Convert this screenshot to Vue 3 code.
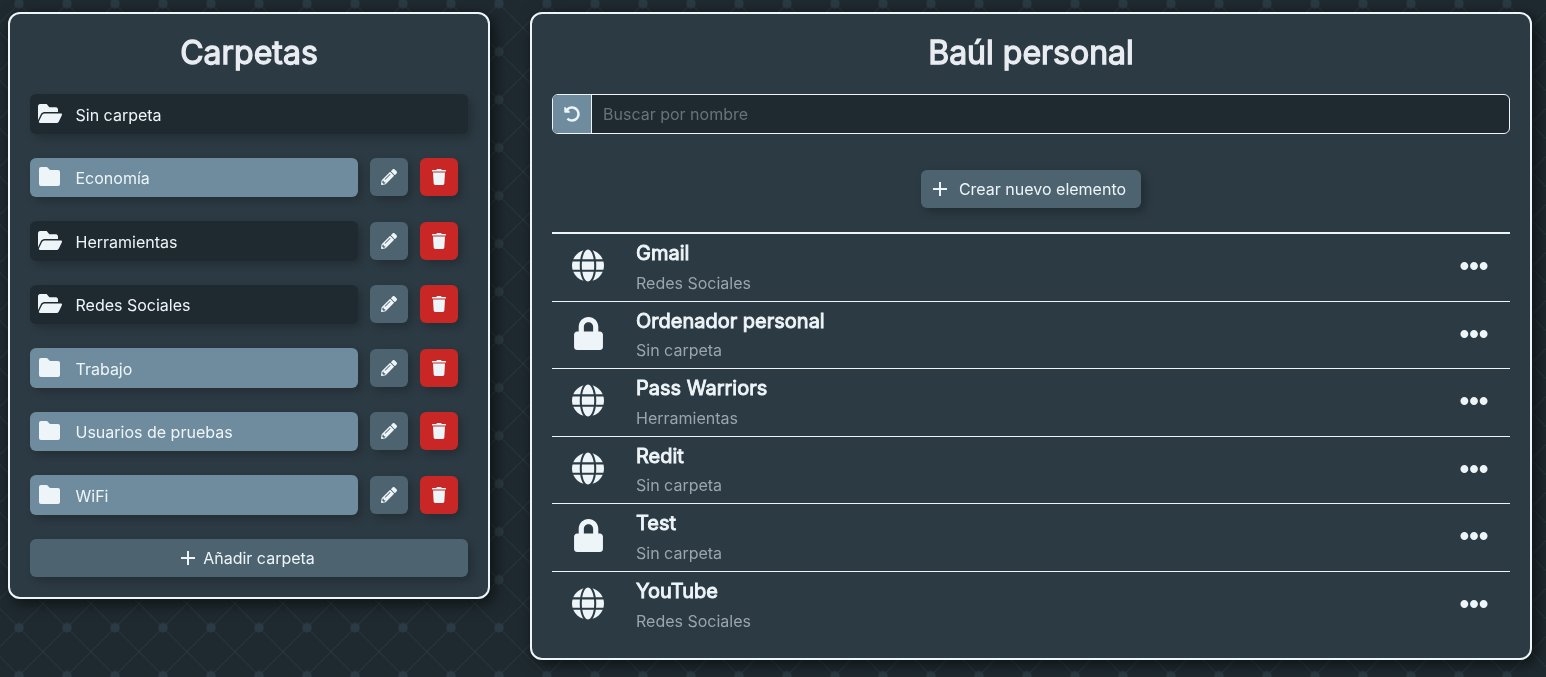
<template>
  <svg class="pattern" width="100%" height="100%" aria-hidden="true">
    <defs>
      <pattern id="diamonds" width="48" height="48" patternUnits="userSpaceOnUse" patternTransform="translate(19 3.7)">
        <path d="M0 0L48 48M48 0L0 48" stroke="#2c3a43" stroke-width="1" fill="none" />
        <circle cx="0" cy="0" r="4.7" fill="#2c3a43" />
        <circle cx="48" cy="0" r="4.7" fill="#2c3a43" />
        <circle cx="0" cy="48" r="4.7" fill="#2c3a43" />
        <circle cx="48" cy="48" r="4.7" fill="#2c3a43" />
      </pattern>
    </defs>
    <rect width="100%" height="100%" fill="url(#diamonds)" />
  </svg>

  <div class="page">
    <aside class="panel folders">
      <h1>Carpetas</h1>

      <div class="folder-row open">
        <svg class="ico-open" viewBox="0 64 576 384" preserveAspectRatio="none"><path :d="icons.folderOpen" /></svg>
        <span>Sin carpeta</span>
      </div>

      <div v-for="folder in folders" :key="folder.name" class="folder-line">
        <div class="folder-row" :class="{ open: folder.open }">
          <svg v-if="folder.open" class="ico-open" viewBox="0 64 576 384" preserveAspectRatio="none"><path :d="icons.folderOpen" /></svg>
          <svg v-else class="ico-closed" viewBox="0 0 21 19"><path :d="icons.folder" /></svg>
          <span>{{ folder.name }}</span>
        </div>
        <button class="square edit">
          <svg viewBox="0 0 512 512"><path :d="icons.pencil" /></svg>
        </button>
        <button class="square remove">
          <svg viewBox="0 0 448 512"><path :d="icons.trash" /></svg>
        </button>
      </div>

      <button class="add-folder">
        <svg class="plus" viewBox="0 0 14 14"><path d="M7 0v14M0 7h14" /></svg>
        Añadir carpeta
      </button>
    </aside>

    <main class="panel vault">
      <h1>Baúl personal</h1>

      <div class="search">
        <button class="reset">
          <svg viewBox="0 0 512 512"><path :d="icons.undo" /></svg>
        </button>
        <input type="text" placeholder="Buscar por nombre" />
      </div>

      <div class="create-wrap">
        <button class="create">
          <svg class="plus" viewBox="0 0 14 14"><path d="M7 0v14M0 7h14" /></svg>
          Crear nuevo elemento
        </button>
      </div>

      <ul class="items">
        <li v-for="item in items" :key="item.name">
          <span class="item-icon">
            <svg v-if="item.type === 'web'" class="globe" viewBox="0 0 496 512"><path :d="icons.globe" /></svg>
            <svg v-else class="lock" viewBox="0 0 448 512"><path :d="icons.lock" /></svg>
          </span>
          <div class="item-text">
            <strong>{{ item.name }}</strong>
            <span>{{ item.folder }}</span>
          </div>
          <svg class="more" viewBox="0 0 512 512"><path :d="icons.dots" /></svg>
        </li>
      </ul>
    </main>
  </div>
</template>

<script setup>
const folders = [
  { name: "Economía", open: false },
  { name: "Herramientas", open: true },
  { name: "Redes Sociales", open: true },
  { name: "Trabajo", open: false },
  { name: "Usuarios de pruebas", open: false },
  { name: "WiFi", open: false },
];

const items = [
  { name: "Gmail", folder: "Redes Sociales", type: "web" },
  { name: "Ordenador personal", folder: "Sin carpeta", type: "lock" },
  { name: "Pass Warriors", folder: "Herramientas", type: "web" },
  { name: "Redit", folder: "Sin carpeta", type: "web" },
  { name: "Test", folder: "Sin carpeta", type: "lock" },
  { name: "YouTube", folder: "Redes Sociales", type: "web" },
];

const icons = {
  folder: "M2 0h6l3 3h8a2 2 0 0 1 2 2v12a2 2 0 0 1-2 2H2a2 2 0 0 1-2-2V2a2 2 0 0 1 2-2z",
  folderOpen:
    "M572.694 292.093L500.27 416.248A63.997 63.997 0 0 1 444.989 448H45.025c-18.523 0-30.064-20.093-20.731-36.093l72.424-124.155A64 64 0 0 1 152 256h399.964c18.523 0 30.064 20.093 20.73 36.093zM152 224h328v-48c0-26.51-21.49-48-48-48H272l-64-64H48C21.49 64 0 85.49 0 112v278.046l69.077-118.418C86.214 242.25 117.989 224 152 224z",
  pencil:
    "M497.9 142.1l-46.1 46.1c-4.7 4.7-12.3 4.7-17 0l-111-111c-4.7-4.7-4.7-12.3 0-17l46.1-46.1c18.7-18.7 49.1-18.7 67.9 0l60.1 60.1c18.8 18.7 18.8 49.1 0 67.9zM284.2 99.8L21.6 362.4.4 483.9c-2.9 16.4 11.4 30.6 27.8 27.8l121.5-21.3 262.6-262.6c4.7-4.7 4.7-12.3 0-17l-111-111c-4.8-4.7-12.4-4.7-17.1 0zM124.1 339.9c-5.5-5.5-5.5-14.3 0-19.8l154-154c5.5-5.5 14.3-5.5 19.8 0s5.5 14.3 0 19.8l-154 154c-5.5 5.5-14.3 5.5-19.8 0zM88 424h48v36.3l-64.5 11.3-31.1-31.1L51.7 376H88v48z",
  trash:
    "M432 32H312l-9.4-18.7A24 24 0 0 0 281.1 0H166.8a23.72 23.72 0 0 0-21.4 13.3L136 32H16A16 16 0 0 0 0 48v16a16 16 0 0 0 16 16h416a16 16 0 0 0 16-16V48a16 16 0 0 0-16-16zM53.2 467a48 48 0 0 0 47.9 45h245.8a48 48 0 0 0 47.9-45L416 112H32z",
  undo:
    "M255.545 8c-66.269.119-126.438 26.233-170.86 68.685L48.971 40.971C33.851 25.851 8 36.559 8 57.941V192c0 13.255 10.745 24 24 24h134.059c21.382 0 32.09-25.851 16.971-40.971l-41.75-41.75c30.864-28.899 70.801-44.907 113.23-45.273 92.398-.798 170.283 73.977 169.484 169.442C423.236 348.009 349.816 424 256 424c-41.127 0-79.997-14.678-110.63-41.556-4.743-4.161-11.906-3.908-16.368.553L89.34 422.659c-4.872 4.872-4.631 12.815.482 17.433C133.798 479.813 192.074 504 256 504c136.966 0 247.999-111.033 248-247.998C504.001 119.193 392.354 7.755 255.545 8z",
  globe:
    "M336.5 160C322 70.7 287.8 8 248 8s-74 62.7-88.5 152h177zM152 256c0 22.2 1.2 43.5 3.3 64h185.3c2.1-20.5 3.3-41.8 3.3-64s-1.2-43.5-3.3-64H155.3c-2.1 20.5-3.3 41.8-3.3 64zm324.7-96c-28.6-67.9-86.5-120.4-158-141.6 24.4 33.8 41.2 84.7 50 141.6h108zM177.2 18.4C105.8 39.6 47.8 92.1 19.3 160h108c8.7-56.9 25.5-107.8 49.9-141.6zM487.4 192H372.7c2.1 21 3.3 42.5 3.3 64s-1.2 43-3.3 64h114.6c5.5-20.5 8.6-41.8 8.6-64s-3.1-43.5-8.5-64zM120 256c0-21.5 1.2-43 3.3-64H8.6C3.2 212.5 0 233.8 0 256s3.2 43.5 8.6 64h114.6c-2-21-3.2-42.5-3.2-64zm39.5 96c14.5 89.3 48.7 152 88.5 152s74-62.7 88.5-152h-177zm159.3 141.6c71.4-21.2 129.4-73.7 158-141.6h-108c-8.8 56.9-25.6 107.8-50 141.6zM19.3 352c28.6 67.9 86.5 120.4 158 141.6-24.4-33.8-41.2-84.7-50-141.6h-108z",
  lock:
    "M400 224h-24v-72C376 68.2 307.8 0 224 0S72 68.2 72 152v72H48c-26.5 0-48 21.5-48 48v192c0 26.5 21.5 48 48 48h352c26.5 0 48-21.5 48-48V272c0-26.5-21.5-48-48-48zm-104 0H152v-72c0-39.7 32.3-72 72-72s72 32.3 72 72v72z",
  dots:
    "M328 256c0 39.8-32.2 72-72 72s-72-32.2-72-72 32.2-72 72-72 72 32.2 72 72zm104-72c-39.8 0-72 32.2-72 72s32.2 72 72 72 72-32.2 72-72-32.2-72-72-72zm-352 0c-39.8 0-72 32.2-72 72s32.2 72 72 72 72-32.2 72-72-32.2-72-72-72z",
};
</script>

<style>
html,
body {
  margin: 0;
  background: #1f2a30;
  height: 100%;
  overflow: hidden;
}
</style>

<style scoped>
.pattern {
  position: fixed;
  inset: 0;
}
.page {
  position: relative;
  display: flex;
  align-items: flex-start;
  gap: 40px;
  padding: 12px 14px 0 8px;
  font-family: Inter, "Liberation Sans", sans-serif;
  font-size: 16px;
  color: #eef5f9;
}
.panel {
  box-sizing: border-box;
  background: #2c3a43;
  border: 2px solid #eef5f9;
  border-radius: 12px;
  box-shadow: 4px 4px 16px rgba(0, 0, 0, 0.6);
  padding: 0 20px;
}
/* the original has only the regular cut, so its bold is a thickened regular */
h1 {
  margin: 0;
  height: 80px;
  line-height: 78px;
  font-size: 32px;
  font-weight: 400;
  -webkit-text-stroke: 1.3px currentColor;
  text-align: center;
  color: #e9edf1;
}
svg {
  fill: currentColor;
  display: block;
}
button {
  font: inherit;
  color: inherit;
  border: 0;
  cursor: pointer;
}

/* folders */
.folders {
  width: 482px;
  height: 587px;
}
.folder-row {
  box-sizing: border-box;
  display: flex;
  align-items: center;
  flex: 1;
  height: 39.5px;
  padding-left: 8px;
  border-radius: 6px;
  background: #6e8c9d;
  box-shadow: 4px 4px 8px rgba(0, 0, 0, 0.2);
}
.folder-row.open {
  background: #1f2a30;
}
.folder-row > span {
  margin: 2px 0 0 13.5px;
}
.ico-open {
  width: 24px;
  height: 19px;
  margin-top: -1px;
}
.ico-closed {
  width: 21px;
  height: 19px;
  margin: -1px 2px 0 1px;
}
.folders > .folder-row {
  margin-bottom: 24px;
}
.folder-line {
  display: flex;
  align-items: center;
  gap: 12px;
  margin-right: 10px;
  margin-bottom: 24px;
}
.square {
  width: 38px;
  height: 38px;
  padding: 0;
  display: flex;
  align-items: center;
  justify-content: center;
  border-radius: 6px;
  box-shadow: 4px 4px 8px rgba(0, 0, 0, 0.2);
}
.edit {
  background: #4d6470;
}
.edit svg {
  width: 16px;
  height: 16px;
}
.remove {
  background: #c92626;
}
.remove svg {
  width: 14px;
  height: 16px;
}
.add-folder {
  display: flex;
  align-items: center;
  justify-content: center;
  gap: 8px;
  width: 100%;
  height: 38px;
  padding: 0 2px 0 0;
  border-radius: 6px;
  background: #4d6470;
  box-shadow: 4px 4px 8px rgba(0, 0, 0, 0.2);
}
.plus {
  width: 14px;
  height: 14px;
  fill: none;
  stroke: currentColor;
  stroke-width: 2;
}

/* vault */
.vault {
  flex: 1;
  height: 648px;
}
.search {
  display: flex;
  height: 39.5px;
  box-sizing: border-box;
  border: 1px solid #eef5f9;
  border-radius: 6px;
  background: #1f2a30;
  overflow: hidden;
}
.reset {
  width: 39px;
  padding: 0;
  display: flex;
  align-items: center;
  justify-content: center;
  background: #6e8c9d;
  border-right: 1px solid #eef5f9;
}
.reset svg {
  width: 16px;
  height: 16px;
}
.search input {
  flex: 1;
  border: 0;
  outline: 0;
  padding: 0 11px;
  background: transparent;
  font: inherit;
  color: inherit;
}
.search input::placeholder {
  color: #687379;
  opacity: 1;
}
.create-wrap {
  display: flex;
  justify-content: center;
  padding: 36px 0 24.5px;
}
.create {
  display: flex;
  align-items: center;
  gap: 12px;
  height: 38px;
  padding: 0 15px 0 12px;
  border-radius: 6px;
  background: #4d6470;
  box-shadow: 4px 4px 8px rgba(0, 0, 0, 0.25);
}
.items {
  list-style: none;
  margin: 0;
  padding: 0;
  border-top: 2px solid #eef5f9;
}
.items li {
  box-sizing: border-box;
  height: 67.5px;
  display: flex;
  align-items: center;
  padding: 0 22px 0 20px;
  border-bottom: 1px solid #eef5f9;
}
.items li:last-child {
  border-bottom: 0;
}
.item-icon {
  width: 32px;
  display: flex;
  justify-content: center;
  margin-top: -3px;
}
.globe {
  width: 32px;
  height: 33px;
}
.lock {
  width: 29px;
  height: 33px;
}
.item-text {
  flex: 1;
  margin: 1.5px 0 0 32px;
  display: flex;
  flex-direction: column;
  gap: 5.5px;
  line-height: 24px;
}
.item-text strong {
  font-size: 20px;
  font-weight: 400;
  -webkit-text-stroke: 0.9px currentColor;
}
.item-text span {
  color: #9aa5ad;
}
.more {
  width: 28px;
  height: 28px;
  margin-top: -2px;
}
</style>
